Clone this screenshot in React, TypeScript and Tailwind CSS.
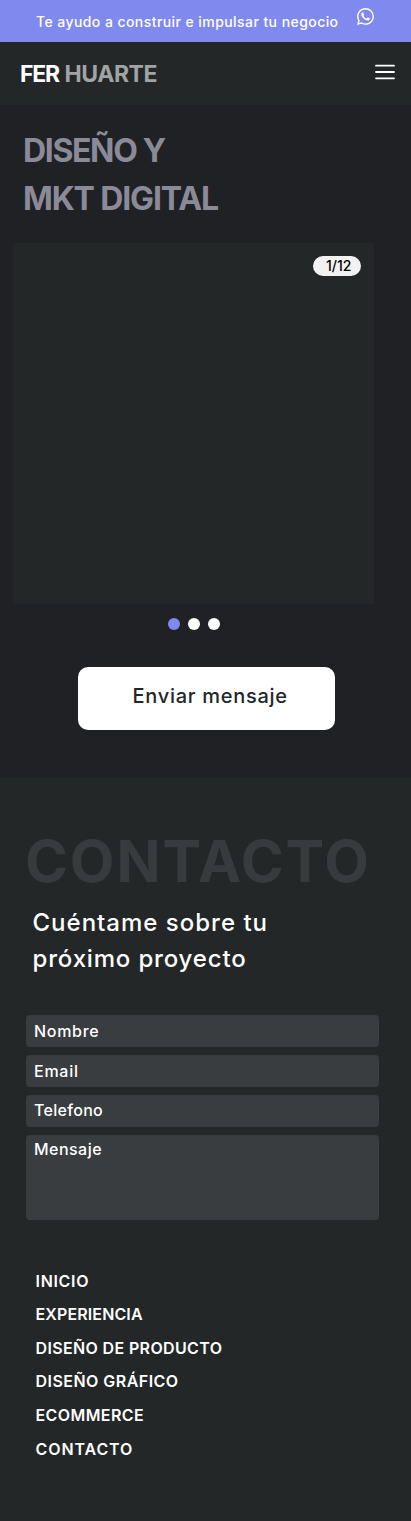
import { BsWhatsapp } from "react-icons/bs";

const navLinks = [
  { label: "INICIO", tracking: "tracking-[0.7px]" },
  { label: "EXPERIENCIA", tracking: "tracking-[0.13px]" },
  { label: "DISEÑO DE PRODUCTO", tracking: "tracking-[0.36px]" },
  { label: "DISEÑO GRÁFICO", tracking: "tracking-[0.47px]" },
  { label: "ECOMMERCE", tracking: "tracking-[0.4px]" },
  { label: "CONTACTO", tracking: "tracking-[0.9px]" },
];

const fields = [
  { label: "Nombre", box: "h-8 leading-8", tracking: "tracking-[0.7px]" },
  { label: "Email", box: "h-8 leading-8", tracking: "tracking-[0.75px]" },
  { label: "Telefono", box: "h-8 leading-[30px]", tracking: "tracking-[0.3px]" },
  { label: "Mensaje", box: "h-[85px] leading-7", tracking: "tracking-[0.47px]" },
];

function Banner() {
  return (
    <div className="flex h-[42px] bg-[#8089ee] pl-9 text-white">
      <p className="w-[320.5px] whitespace-nowrap pt-[11.5px] text-sm leading-5 font-medium tracking-[0.43px]">
        Te ayudo a construir e impulsar tu negocio
      </p>
      <BsWhatsapp className="mt-2 h-[17px] w-[17px]" />
    </div>
  );
}

function Header() {
  return (
    <header className="flex h-[63px] items-center justify-between bg-[#232728] pr-4 pl-5">
      <div className="flex pt-px text-[23px] leading-8 font-bold">
        <span className="w-[44.5px] tracking-[-1.2px] text-white">FER</span>
        <span className="tracking-[-0.45px] text-[#a2a3a5]">HUARTE</span>
      </div>
      <button type="button" aria-label="Menú" className="-mt-[3px]">
        <svg width="20" height="16" viewBox="0 0 20 16" stroke="white" strokeWidth="1.8" strokeLinecap="round">
          <path d="M1 1.7h18M1 8h18M1 14.3h18" />
        </svg>
      </button>
    </header>
  );
}

function Hero() {
  return (
    <section className="h-[673px] bg-[#202124] pt-[22px]">
      <h1 className="flex flex-col pl-[23px] text-[32px] leading-[48px] font-bold text-[#8b8a99]">
        <span className="tracking-[-1.35px]">DISEÑO Y</span>
        <span className="tracking-[-1.13px]">MKT DIGITAL</span>
      </h1>
      <div className="mt-5 ml-[13px] flex h-[361px] w-[361px] justify-end bg-[#232728] pt-[13px] pr-[13px]">
        <span className="h-5 w-12 rounded-full bg-[#f2f2f2] pl-[13px] text-sm leading-5 font-medium text-black">1/12</span>
      </div>
      <div className="mt-[14px] ml-[168px] flex gap-2">
        <span className="h-3 w-3 rounded-full bg-[#8089ee]" />
        <span className="h-3 w-3 rounded-full bg-white" />
        <span className="h-3 w-3 rounded-full bg-white" />
      </div>
      <button
        type="button"
        className="mt-[37px] ml-[78px] block h-[63px] w-[256.5px] rounded-[10px] bg-white pb-[5px] pl-[54.5px] text-left text-xl font-medium tracking-[0.72px] text-[#232728]"
      >
        Enviar mensaje
      </button>
    </section>
  );
}

function Contact() {
  return (
    <section className="h-[743px] bg-[#232728] pt-[53px] text-white">
      <h2 className="pl-[25px] text-[58px] leading-[60px] font-bold tracking-[1.9px] text-[#373b3d]">CONTACTO</h2>
      <p className="mt-[14px] flex flex-col pl-[32.5px] text-2xl leading-9 font-medium">
        <span className="tracking-[1px]">Cuéntame sobre tu</span>
        <span className="tracking-[0.83px]">próximo proyecto</span>
      </p>
      <form className="mt-[38px] ml-[26px] flex w-[353px] flex-col gap-2">
        {fields.map((f) => (
          <label key={f.label} className={`rounded bg-[#3a3d40] pl-2 text-base font-medium ${f.box} ${f.tracking}`}>
            {f.label}
          </label>
        ))}
      </form>
      <nav className="mt-[44.7px] flex flex-col pl-[35.5px] text-base leading-[33.6px] font-semibold">
        {navLinks.map((l) => (
          <a key={l.label} href="#" className={l.tracking}>
            {l.label}
          </a>
        ))}
      </nav>
    </section>
  );
}

export default function App() {
  return (
    <div className="w-[411px] overflow-hidden font-['Inter',sans-serif]">
      <Banner />
      <Header />
      <Hero />
      <Contact />
    </div>
  );
}
